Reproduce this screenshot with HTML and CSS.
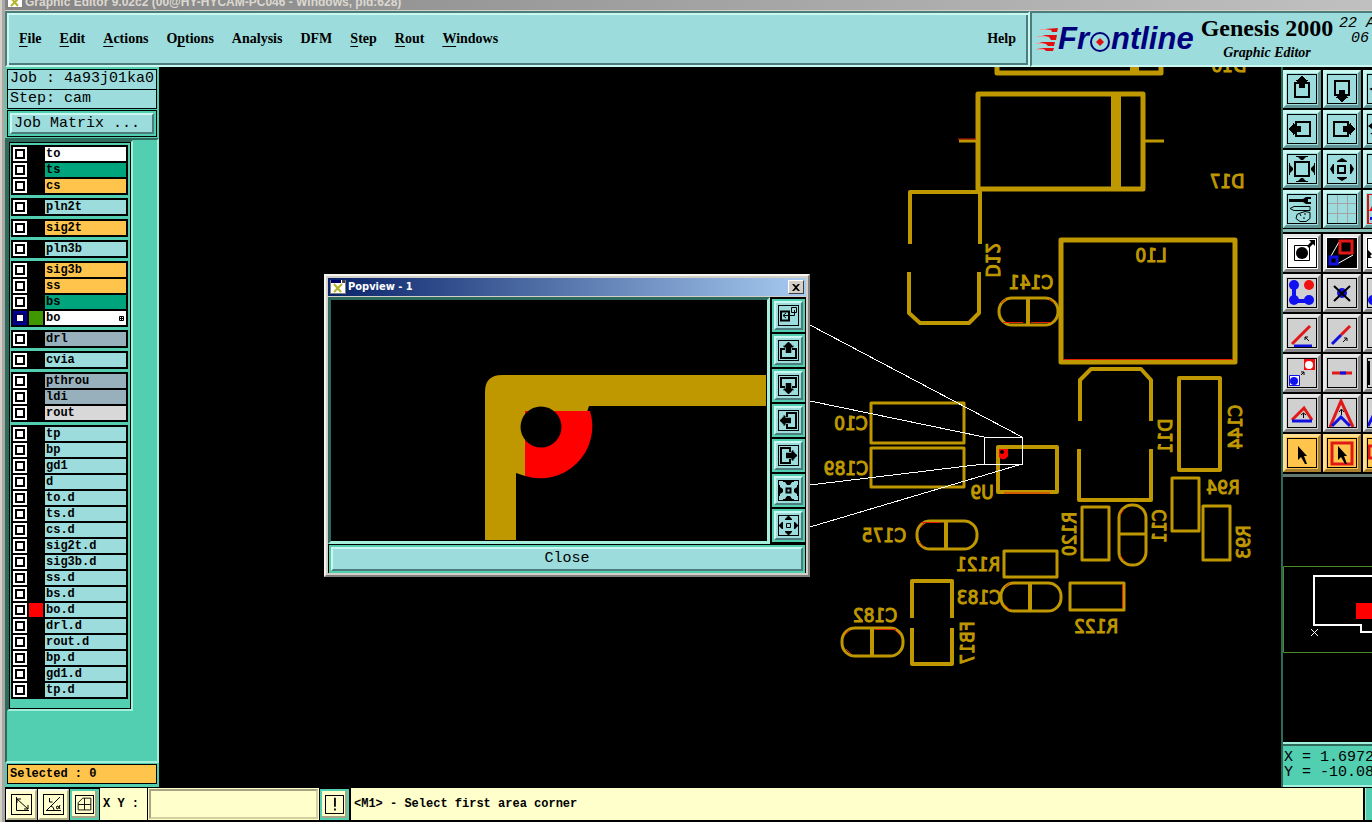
FILE: index.html
```html
<!DOCTYPE html>
<html lang="en">
<head>
<meta charset="utf-8">
<title>Graphic Editor</title>
<link rel="stylesheet" href="styles.css">
</head>
<body>
<svg class="defs" aria-hidden="true">
  <symbol id="arrow-up" viewBox="0 0 12 12"><path d="M5 0h2v1h1v1h1v1h1v1h2v1h-1v1H9v6H3V6H1V5H0V4h2V3h1V2h1V1h1z"/></symbol>
  <symbol id="xlogo" viewBox="0 0 16 14"><path fill="#fff" d="M0 0h16v14H0z"/><path fill="#00006a" d="M0 0h11v3H0z"/><path fill="#444" d="M12 0h4v3h-4z"/><path d="M4 4l7 8M12 4l-8 8" stroke="#b5b52a" stroke-width="2"/><path d="M0 13.500h16M.5 0v14M15.500 0v14" stroke="#808080"/></symbol>
</svg>
<div class="window">
  <div class="titlebar"><svg class="titleicon"><use href="#xlogo"/></svg><span>Graphic Editor 9.02c2 (00@HY-HYCAM-PC046 - Windows, pid:628)</span></div>

  <header class="header">
    <nav class="menubar">
      <button><u>F</u>ile</button><button><u>E</u>dit</button><button><u>A</u>ctions</button><button>O<u>p</u>tions</button><button>Analysis</button><button>DFM</button><button><u>S</u>tep</button><button><u>R</u>out</button><button><u>W</u>indows</button><button class="help">Help</button>
    </nav>
    <div class="brand">
      <div class="logo">
        <svg class="flames" viewBox="0 0 22 24"><path fill="#e8a0a0" d="M4 2h10v1H4zM1 9h12v1H1zM0 16h12v1H0zM0 22h10v1H0z"/><path fill="#e01010" d="M9 2l13-1-1 4h-5l-1-2zM6 8h15l-1 5h-5l-2-3zM3 15h16l-1 4h-6l-2-2zM1 21h17l-1 3h-7l-2-2z"/></svg>
        <span>Fr</span><svg class="target" viewBox="0 0 22 22"><circle cx="11" cy="11" r="9" fill="#9cdcdc" stroke="#00007c" stroke-width="2"/><path fill="#e01010" d="M11 7l4 4-4 4-4-4z"/></svg><span>ntline</span>
      </div>
      <div class="product"><strong>Genesis 2000</strong><em>Graphic Editor</em></div>
      <div class="date"><span>22 A</span><span class="time">06</span></div>
    </div>
  </header>

  <div class="main">
    <aside class="sidebar">
      <div class="info"><div>Job : 4a93j01ka0</div><div>Step: cam</div></div>
      <div class="matrix"><button>Job Matrix ...</button></div>
      <div class="well">
        <div class="layers">
          <div class="group">
            <label class="layer"><input type="checkbox"><i></i><span class="white">to</span></label>
            <label class="layer"><input type="checkbox"><i></i><span class="green">ts</span></label>
            <label class="layer"><input type="checkbox"><i></i><span class="amber">cs</span></label>
          </div>
          <div class="group"><label class="layer"><input type="checkbox"><i></i><span>pln2t</span></label></div>
          <div class="group"><label class="layer"><input type="checkbox"><i></i><span class="amber">sig2t</span></label></div>
          <div class="group"><label class="layer"><input type="checkbox"><i></i><span>pln3b</span></label></div>
          <div class="group">
            <label class="layer"><input type="checkbox"><i></i><span class="amber">sig3b</span></label>
            <label class="layer"><input type="checkbox"><i></i><span class="amber">ss</span></label>
            <label class="layer"><input type="checkbox"><i></i><span class="green">bs</span></label>
            <label class="layer"><input type="checkbox" checked><i class="lime"></i><span class="white">bo<svg class="affected" viewBox="0 0 5 5"><path d="M.5.5h4v4h-4zM2.500 0v5M0 2.500h5" fill="none" stroke="#000"/></svg></span></label>
          </div>
          <div class="group"><label class="layer"><input type="checkbox"><i></i><span class="slate">drl</span></label></div>
          <div class="group"><label class="layer"><input type="checkbox"><i></i><span>cvia</span></label></div>
          <div class="group">
            <label class="layer"><input type="checkbox"><i></i><span class="slate">pthrou</span></label>
            <label class="layer"><input type="checkbox"><i></i><span class="slate">ldi</span></label>
            <label class="layer"><input type="checkbox"><i></i><span class="plain">rout</span></label>
          </div>
          <div class="group">
            <label class="layer"><input type="checkbox"><i></i><span>tp</span></label>
            <label class="layer"><input type="checkbox"><i></i><span>bp</span></label>
            <label class="layer"><input type="checkbox"><i></i><span>gd1</span></label>
            <label class="layer"><input type="checkbox"><i></i><span>d</span></label>
            <label class="layer"><input type="checkbox"><i></i><span>to.d</span></label>
            <label class="layer"><input type="checkbox"><i></i><span>ts.d</span></label>
            <label class="layer"><input type="checkbox"><i></i><span>cs.d</span></label>
            <label class="layer"><input type="checkbox"><i></i><span>sig2t.d</span></label>
            <label class="layer"><input type="checkbox"><i></i><span>sig3b.d</span></label>
            <label class="layer"><input type="checkbox"><i></i><span>ss.d</span></label>
            <label class="layer"><input type="checkbox"><i></i><span>bs.d</span></label>
            <label class="layer"><input type="checkbox"><i class="red"></i><span>bo.d</span></label>
            <label class="layer"><input type="checkbox"><i></i><span>drl.d</span></label>
            <label class="layer"><input type="checkbox"><i></i><span>rout.d</span></label>
            <label class="layer"><input type="checkbox"><i></i><span>bp.d</span></label>
            <label class="layer"><input type="checkbox"><i></i><span>gd1.d</span></label>
            <label class="layer"><input type="checkbox"><i></i><span>tp.d</span></label>
          </div>
        </div>
      </div>
      <div class="selected">Selected : 0</div>
    </aside>

    <section class="canvas">
      <svg class="board">
        <g transform="translate(-159 -67)">
          <g class="trace">
            <path class="heavy" d="M997 66V73H1161V66"/>
            <path d="M1134.500 66v7" stroke-width="9"/>
            <path class="heavy" d="M978 94H1143V189H978z"/>
            <path class="band" d="M1116 94v95"/>
            <path class="thin" d="M959 141h18M1144 141h20"/>
            <path d="M910 244V192H980V244M909 272V313L920 323H969L979 313V272"/>
            <rect class="thin" x="999" y="298" width="59" height="27" rx="13"/><path d="M1028 298v27"/>
            <path class="heavy" d="M1061 240H1235V362H1061z"/>
            <path d="M1080 421V380L1091 369H1141L1151 380V421M1079 449V500H1151V449"/>
            <path d="M1179 378H1220V470H1179z"/>
            <path class="thin" d="M871 403H964V443H871zM871 448H964V487H871z"/>
            <path d="M998 447H1057V492H998z"/>
            <rect class="thin" x="917" y="521" width="60" height="28" rx="13"/><path d="M946 521v28"/>
            <path class="thin" d="M1082 507H1109V560H1082zM1172 478H1199V531H1172zM1203 506H1230V560H1203zM1004 551H1057V577H1004zM1070 583H1124V610H1070z"/>
            <rect class="thin" x="1119" y="505" width="27" height="60" rx="13"/><path class="thin" d="M1119 534h27"/>
            <rect class="thin" x="1001" y="583" width="60" height="28" rx="13"/><path d="M1030 583v28"/>
            <path d="M912 618V581H952V618M912 628V664H952V628"/>
            <rect class="thin" x="842" y="628" width="61" height="28" rx="13"/><path d="M872 628v28"/>
          </g>
          <path class="fringe" d="M958 139h18M1063 359.500h170M1004 493h46M1003 322.500h20M1031 322.500h20M921 522.500h20M1122.500 584v24M876 629.500h20M1001 303l5-4M1049 299l5 4M1120 515l4-6M1120 555l4 6M845 635l4-5M846 649l5 5M895 630l5 5M920 528l4-5M919 542l5 5M1005 587l5-4M1005 605l5 5"/>
          <g class="ref">
            <text transform="translate(1229 72) scale(-1 1)">D16</text>
            <text transform="translate(1227 188) scale(-1 1)">D17</text>
            <text transform="translate(1151 262) scale(-1 1)">L10</text>
            <text transform="translate(1031 289) scale(-1 1)">C141</text>
            <text transform="translate(851 430) scale(-1 1)">C10</text>
            <text transform="translate(846 475) scale(-1 1)">C189</text>
            <text transform="translate(982 499) scale(-1 1)">U9</text>
            <text transform="translate(884 542) scale(-1 1)">C175</text>
            <text transform="translate(978 571) scale(-1 1)">R121</text>
            <text transform="translate(979 604) scale(-1 1)">C183</text>
            <text transform="translate(875 622) scale(-1 1)">C182</text>
            <text transform="translate(1096 633) scale(-1 1)">R122</text>
            <text transform="translate(1223 494) scale(-1 1)">R94</text>
            <text transform="translate(986 260) rotate(-90) scale(1 -1)">D12</text>
            <text transform="translate(1172 436) rotate(90) scale(1 -1)">D11</text>
            <text transform="translate(1242 427) rotate(90) scale(1 -1)">C144</text>
            <text transform="translate(1076 534) rotate(90) scale(1 -1)">R120</text>
            <text transform="translate(1166 526) rotate(90) scale(1 -1)">C11</text>
            <text transform="translate(1250 542) rotate(90) scale(1 -1)">R93</text>
            <text transform="translate(974 643) rotate(90) scale(1 -1)">FB17</text>
          </g>
          <path d="M999 449h9v4a5 5 0 0 1-9 4z" fill="#f00"/><circle cx="1002" cy="452" r="2"/>
          <path class="lead" d="M984.500 437.500H1022.500V464.500H984.500zM810 325L1022 437M810 401L984 437M810 485L984 464M810 527L1022 464"/>
        </g>
      </svg>

      <div class="popview" role="dialog" aria-label="Popview - 1">
        <div class="poptitle"><svg class="popicon"><use href="#xlogo"/></svg><span>Popview - 1</span><button class="x" aria-label="Close window"><svg viewBox="0 0 8 7"><path d="M0 0h2l2 2 2-2h2L5 3.500 8 7H6L4 5 2 7H0l3-3.500z"/></svg></button></div>
        <div class="popbody">
          <div class="popmid">
            <svg class="detail">
              <path fill="#bf9800" d="M154 240V92q0-17 17-17H435V106H258Q238 172 185 173V240z"/>
              <path fill="#f00" d="M194 111H259A52 52 0 0 1 194 176z"/>
              <path fill="#bf9800" d="M185 106h9v70l-9-3z"/>
              <circle cx="210" cy="127" r="20.500"/>
            </svg>
            <div class="poptools">
              <button aria-label="Pick area"><svg viewBox="0 0 21 21"><path class="o2" d="M3 6.500h8v9H3z"/><path class="o1" d="M13.500 2.500h5v5h-5zM16.500 5v5.500H5M8 8l-3 2.500 3 2.500"/></svg></button>
              <button aria-label="Pan up"><svg viewBox="0 0 21 21"><path class="o2" d="M7 9H3v9h15V9h-4"/><use href="#arrow-up" x="5" y="2" width="11" height="11"/></svg></button>
              <button aria-label="Pan down"><svg viewBox="0 0 21 21"><g transform="rotate(180 10.500 10.500)"><path class="o2" d="M7 9H3v9h15V9h-4"/><use href="#arrow-up" x="5" y="2" width="11" height="11"/></g></svg></button>
              <button aria-label="Pan left"><svg viewBox="0 0 21 21"><g transform="rotate(-90 10.500 10.500)"><path class="o2" d="M7 9H3v9h15V9h-4"/><use href="#arrow-up" x="5" y="2" width="11" height="11"/></g></svg></button>
              <button aria-label="Pan right"><svg viewBox="0 0 21 21"><g transform="rotate(90 10.500 10.500)"><path class="o2" d="M7 9H3v9h15V9h-4"/><use href="#arrow-up" x="5" y="2" width="11" height="11"/></g></svg></button>
              <button aria-label="Zoom in"><svg viewBox="0 0 21 21"><path class="o2" d="M8.500 8.500h4v4h-4z"/><path d="M5 1h11v1h-2l-2 3H9L7 2H5zM5 20h11v-1h-2l-2-3H9l-2 3H5zM1 5v11h1v-2l3-2V9L2 7V5zM20 5v11h-1v-2l-3-2V9l3-2V5z"/></svg></button>
              <button aria-label="Zoom out"><svg viewBox="0 0 21 21"><path class="o1" d="M8.500 8.500h4v4h-4z"/><path d="M10 1h1l3 3v1H7V4zM10 20h1l3-3v-1H7v1zM1 10v1l3 3h1V7H4zM20 10v1l-3 3h-1V7h1z"/></svg></button>
            </div>
          </div>
          <div class="popclose"><button>Close</button></div>
        </div>
      </div>
    </section>

    <aside class="tools">
      <div class="toolgrid cyan">
        <button aria-label="Pan up"><svg viewBox="0 0 30 30"><path class="o2" d="M8 9h14v14H8z"/><use href="#arrow-up" x="9" y="2" width="12" height="12"/></svg></button>
        <button aria-label="Pan down"><svg viewBox="0 0 30 30"><path class="o2" d="M8 7h14v14H8z"/><use href="#arrow-up" x="9" y="2" width="12" height="12" transform="rotate(180 15 15)"/></svg></button>
        <button aria-label="Previous view"><svg viewBox="0 0 30 30"><path d="M2 15l5-2v4z"/></svg></button>
        <button aria-label="Pan left"><svg viewBox="0 0 30 30"><path class="o2" d="M9 8h14v14H9z"/><use href="#arrow-up" x="9" y="2" width="12" height="12" transform="rotate(-90 15 15)"/></svg></button>
        <button aria-label="Pan right"><svg viewBox="0 0 30 30"><path class="o2" d="M7 8h14v14H7z"/><use href="#arrow-up" x="9" y="2" width="12" height="12" transform="rotate(90 15 15)"/></svg></button>
        <button aria-label="Home view"><svg viewBox="0 0 30 30"><path d="M1 12l4-3v6zM3 19h4v3z"/></svg></button>
        <button aria-label="Zoom in"><svg viewBox="0 0 30 30"><path class="o2" d="M8 8h14v14H8z"/><path d="M9 2h12v1h-2l-3 3h-2l-3-3H9zM9 28h12v-1h-2l-3-3h-2l-3 3H9zM2 9v12h1v-2l3-3v-2l-3-3V9zM28 9v12h-1v-2l-3-3v-2l3-3V9z"/></svg></button>
        <button aria-label="Zoom out"><svg viewBox="0 0 30 30"><path class="o2" d="M11 12h7v7h-7z"/><path d="M15 4l5 3v1H10V7zM15 27l5-3v-1H10v1zM3 15l3-5h1v10H6zM27 15l-3-5h-1v10h1z"/></svg></button>
        <button aria-label="Fit"><svg viewBox="0 0 30 30"></svg></button>
        <button aria-label="Setup"><svg viewBox="0 0 30 30"><path d="M2 5h14l3-2h5v2h-3v3h3v2h-5l-3-2H2z"/><path class="o1" d="M3 14.500l4-2h16v4H7zM12 19.500l6-2 5 1v6l-4 3h-6l-4-3 1-4zM13 20l1 2M18 19v2M16 24h2"/></svg></button>
        <button aria-label="Grid"><svg viewBox="0 0 30 30"><path d="M10.500 0v30M20.500 0v30M0 9.500h30M0 19.500h30" stroke="#a0a4a4"/></svg></button>
        <button aria-label="Snap" class="hot"><svg viewBox="0 0 30 30"><path fill="#e01010" d="M0 0h2v30H0zM2 17l3-5v5z"/><path fill="#1010e0" d="M3 23h2v3H3z"/></svg></button>
      </div>
      <div class="toolgrid grey">
        <button class="white" aria-label="Select"><svg viewBox="0 0 30 30"><path class="o1" d="M7.500 7.500h15v15h-15z"/><circle cx="15" cy="15" r="6"/><path d="M20 8l4-4-2-2h6v6l-2-2-4 4z"/></svg></button>
        <button class="white" aria-label="Popview"><svg class="dark" viewBox="0 0 30 30"><path d="M4 18L12 4M10 26l16-9" stroke="#fff"/><path class="r" d="M13 3h12v12H13z"/><path class="b" d="M3 19h7v7H3z"/></svg></button>
        <button class="white" aria-label="Window"><svg viewBox="0 0 30 30"><path d="M1 12v8h4l-2-2 2-2z"/></svg></button>
        <button aria-label="Chain"><svg viewBox="0 0 30 30"><path d="M7 7v16h16" stroke="#1010f0" stroke-width="4" fill="none"/><g fill="#1010f0"><circle cx="7" cy="7" r="5"/><circle cx="7" cy="22" r="5"/><circle cx="22" cy="22" r="5"/></g><circle cx="22" cy="7" r="5" fill="#f01010"/></svg></button>
        <button aria-label="Delete"><svg viewBox="0 0 30 30"><circle cx="15" cy="15" r="5" fill="#1010e0"/><path class="o2" d="M7 8l16 15M23 8L7 23"/></svg></button>
        <button aria-label="Copy"><svg viewBox="0 0 30 30"><circle cx="6" cy="22" r="5" fill="#1010f0"/></svg></button>
        <button aria-label="Rotate line"><svg viewBox="0 0 30 30"><path class="r" d="M5 26L23 8"/><path class="b" d="M7 28h18"/><path class="o1" d="M22 23l-4-4M18 22v-3h3"/></svg></button>
        <button aria-label="Extend line"><svg viewBox="0 0 30 30"><path class="r" d="M14 17l9-9"/><path class="b" d="M5 26l9-9"/><path class="o1" d="M16 24l4-4M17 20h3v3"/></svg></button>
        <button aria-label="Trim line"><svg viewBox="0 0 30 30"></svg></button>
        <button aria-label="Move"><svg viewBox="0 0 30 30"><path fill="#f01010" d="M17 1h11v11H17z"/><circle cx="22" cy="7" r="4" fill="#fff"/><path d="M2.500 17.500h10v10h-10z" fill="#fff" stroke="#1010f0"/><circle cx="7" cy="23" r="4" fill="#1010f0"/><path class="o1" d="M14 17l3-3M14 14h3v3"/></svg></button>
        <button aria-label="Break"><svg viewBox="0 0 30 30"><path class="r" d="M5 15h20"/><path class="b" d="M13 15h6"/></svg></button>
        <button aria-label="Resize"><svg viewBox="0 0 30 30"><path class="o2" d="M2 3v24"/></svg></button>
        <button aria-label="Stretch"><svg viewBox="0 0 30 30"><path class="r" d="M5 22L17 10l8 12"/><path class="b" d="M5 23h20"/><path class="o1" d="M16.500 20v-5M14 17l2.500-2 2.500 2"/></svg></button>
        <button aria-label="Taper"><svg viewBox="0 0 30 30"><path class="r" d="M3 29L14 3l12 26"/><path class="b" d="M5 28l9-9 9 9"/><path class="o1" d="M14.500 17v-5M12 14l2.500-3 2.500 3"/></svg></button>
        <button aria-label="Bend"><svg viewBox="0 0 30 30"><path class="b" d="M1 28L8 14"/></svg></button>
        <button class="amber" aria-label="Pointer"><svg viewBox="0 0 30 30"><path d="M11 8v14l3-3 4 7h2l-3-8h3z"/></svg></button>
        <button class="amber" aria-label="Area select"><svg viewBox="0 0 30 30"><path class="r" d="M5 5h20v21H5z"/><path d="M11 8v14l3-3 4 7h2l-3-8h3z"/></svg></button>
        <button class="amber" aria-label="Polygon select"><svg viewBox="0 0 30 30"><path class="r" d="M20 8H2v12h18"/></svg></button>
      </div>
      <svg class="map">
        <g transform="translate(-1283 -477)">
          <path fill="none" stroke="#4c8c24" d="M1390 566.500H1283.500V652.500H1390"/>
          <path fill="none" stroke="#fff" stroke-width="2" d="M1390 576H1314V625H1361V632H1390"/>
          <path fill="#f00" d="M1356 603h34v16h-34z"/>
          <path stroke="#fff" d="M1311 629l7 7M1318 629l-7 7"/>
        </g>
      </svg>
      <div class="coords">X = 1.6972<br>Y = -10.08</div>
    </aside>
  </div>

  <footer class="status">
    <button aria-label="Absolute"><svg viewBox="0 0 21 21"><path class="o1" d="M5.500 3v13.500H18M6 5l11 10M6 9V5h4M17 11v4h-4"/></svg></button>
    <button aria-label="Angle"><svg viewBox="0 0 21 21"><path class="o1" d="M3 16.500h15M4 16L17 3M6.500 4v4h3M8 12q3 1 3 4M17 11q-1 4-3 4-1-2 0-3 2 0 3 3"/></svg></button>
    <button class="on" aria-label="Grid snap"><svg viewBox="0 0 21 21"><path class="o1" d="M3.500 16.500V8.500L8.500 3.500H17.500V16.500zM3.500 10.500h14M10.500 3.500v13"/></svg></button>
    <label for="xy">X Y :</label>
    <input id="xy" type="text">
    <button class="on" aria-label="Alert"><svg viewBox="0 0 21 21"><path d="M10 3h2v10h-2zM10 15h2v2h-2z"/></svg></button>
    <output>&lt;M1&gt; - Select first area corner</output>
    <div class="end"></div>
  </footer>
</div>
</body>
</html>
```
FILE: styles.css
```css
:root {
  --cyan: #9cdcdc;
  --light: #c8f8f0;
  --dark: #4c7c7c;
  --teal: #52ceb0;
  --teal-dark: #2e6a5c;
  --teal-light: #a4f0dc;
  --cream: #ffffcc;
  --amber: #ffc44c;
  --gold: #bf9800;
  --mono: "Liberation Mono", "DejaVu Sans Mono", monospace;
  --serif: "Liberation Serif", serif;
  --sans: "Liberation Sans", sans-serif;
}
* { box-sizing: border-box; }
body { margin: 0; background: #d4d0c8; overflow: hidden; }
button { margin: 0; padding: 0; border-radius: 0; color: #000; font: inherit; }
svg { display: block; }
.defs { display: none; }
.o1 { fill: none; stroke: #000; stroke-width: 1; }
.o2 { fill: none; stroke: #000; stroke-width: 2; }
.r { fill: none; stroke: #e01818; stroke-width: 2; }
.b { fill: none; stroke: #1010e0; stroke-width: 2; }

.window {
  display: grid;
  grid-template-rows: 11px 56px 1fr 35px;
  min-height: 100vh;
  margin-left: 2px;
  border-left: 3px solid #a8a8a4;
  background: #000;
}

.titlebar {
  display: flex;
  align-items: flex-end;
  gap: 2px;
  overflow: hidden;
  padding-left: 2px;
  background: linear-gradient(90deg, #848484, #c0c0c0);
  border-bottom: 1px solid #d4d0c8;
  color: #dcd8d0;
  font: bold 12px/16px var(--sans);
  white-space: nowrap;
}
.titleicon { width: 16px; height: 14px; flex: none; margin-bottom: 2px; }

.header { display: grid; grid-template-columns: 1fr 342px; min-width: 0; }
.menubar {
  display: flex;
  align-items: center;
  gap: 18px;
  padding: 0 12px;
  background: var(--cyan);
  border: 2px solid;
  border-color: var(--dark) var(--light) var(--light) var(--dark);
  box-shadow: inset 2px 2px 0 var(--light), inset -2px -2px 0 var(--dark);
}
.menubar button { border: 0; background: none; font: bold 14px/20px var(--serif); }
.menubar u { text-underline-offset: 3px; }
.menubar .help { margin-left: auto; }
.brand {
  display: flex;
  overflow: hidden;
  background: var(--cyan);
  border: 2px solid;
  border-color: var(--dark) transparent var(--light) var(--dark);
  border-right: 0;
  padding-left: 4px;
  white-space: nowrap;
}
.logo { display: flex; align-items: center; color: #00007c; font: italic bold 31px/46px var(--sans); flex: none; width: 162px; }
.flames { width: 22px; height: 24px; flex: none; }
.target { width: 22px; height: 22px; flex: none; margin-top: 6px; }
.product { display: flex; flex-direction: column; align-items: center; flex: none; width: 138px; }
.product strong { font: bold 24px/30px var(--serif); }
.product em { font: italic bold 14px/20px var(--serif); }
.date { display: flex; flex-direction: column; flex: none; margin-left: 3px; padding-top: 3px; font: italic 15px/15px var(--mono); }
.time { padding-left: 12px; }

.main { display: grid; grid-template-columns: 154px 1fr 91px; min-height: 0; }

.sidebar { display: flex; flex-direction: column; background: var(--teal); padding-top: 2px; font: 15px/18px var(--mono); }
.info { margin: 0 2px; border: 1px solid #000; background: var(--cyan); white-space: nowrap; }
.info div { padding-left: 2px; height: 19px; }
.info div + div { border-top: 1px solid #000; }
.matrix { margin: 1px 2px; border: 1px solid #000; padding: 2px; }
.matrix button {
  width: 100%;
  height: 21px;
  padding-left: 2px;
  text-align: left;
  font: 15px/17px var(--mono);
  background: var(--cyan);
  border: 2px solid;
  border-color: var(--light) var(--dark) var(--dark) var(--light);
}
.well {
  flex: 1;
  border: 2px solid;
  border-color: var(--teal-dark) var(--teal-light) var(--teal-light) var(--teal-dark);
}
.layers {
  display: grid;
  gap: 3px;
  width: 126px;
  padding: 3px 3px 10px 2px;
  border: 2px solid;
  border-color: var(--teal-dark) var(--teal-light) var(--teal-light) var(--teal-dark);
  box-shadow: inset 0 0 0 1px #000;
}
.group { display: grid; gap: 2px; padding: 2px; background: #000; }
.layer { display: grid; grid-template-columns: 14px 14px 1fr; gap: 2px; height: 14px; font: bold 12px/14px var(--mono); }
.layer input {
  appearance: none;
  width: 14px;
  height: 14px;
  margin: 0;
  background: #fff;
  border: 2px solid #fff;
  box-shadow: inset 0 0 0 2px #000;
}
.layer input:checked { border-color: #0000a0; box-shadow: inset 0 0 0 2px #000060; }
.layer span { display: flex; align-items: center; justify-content: space-between; padding: 0 2px 0 1px; background: var(--cyan); }
.layer .white { background: #fff; }
.layer .green { background: #00a47c; }
.layer .amber { background: var(--amber); }
.layer .slate { background: #98b0bc; }
.layer .plain { background: #d8d8d8; }
.lime { background: #409800; }
.red { background: #f00; }
.affected { width: 5px; height: 5px; }
.selected { margin: 1px 2px 3px; padding: 0 2px; border: 1px solid #000; background: var(--amber); font: bold 12px/18px var(--mono); }

.canvas { position: relative; overflow: hidden; background: #000; min-width: 0; }
.board { width: 100%; height: 100%; position: absolute; }
.trace { fill: none; stroke: var(--gold); stroke-width: 4; stroke-linejoin: round; }
.trace .thin { stroke-width: 3; }
.trace .heavy { stroke-width: 5; }
.trace .band { stroke-width: 10; }
.fringe { fill: none; stroke: #e02000; stroke-width: 1; }
.ref { fill: var(--gold); stroke: var(--gold); stroke-width: 1; font: 19px "DejaVu Sans Condensed", sans-serif; text-anchor: middle; }
.lead { fill: none; stroke: #fff; stroke-width: 1; shape-rendering: crispEdges; }

.popview {
  position: absolute;
  left: 165px;
  top: 207px;
  width: 486px;
  padding: 2px;
  background: #d4d0c8;
  border: 2px solid;
  border-color: #f4f4f0 #808080 #808080 #f4f4f0;
}
.poptitle { display: flex; align-items: center; gap: 2px; height: 18px; padding: 0 2px; margin-bottom: 1px; background: linear-gradient(90deg, #0a246a, #a6caf0); color: #fff; font: bold 11px/18px "DejaVu Sans Condensed", var(--sans); }
.popicon { width: 16px; height: 14px; }
.x { display: grid; place-items: center; margin-left: auto; width: 16px; height: 14px; background: #d4d0c8; border: 1px solid; border-color: #fff #404040 #404040 #fff; }
.x svg { width: 8px; height: 7px; }
.popbody { background: #000; }
.popmid { display: grid; grid-template-columns: 1fr 36px; }
.detail { width: 100%; height: 247px; border: 3px solid; border-color: var(--teal-dark) var(--teal-light) var(--teal-light) var(--teal-dark); }
.poptools { display: grid; grid-auto-rows: 29px; gap: 6px; padding: 4px 0 0 4px; }
.poptools button { width: 29px; padding: 2px; background: var(--cyan); border: 2px solid; border-color: var(--light) var(--dark) var(--dark) var(--light); box-shadow: 0 0 0 2px var(--teal); }
.poptools svg { width: 21px; height: 21px; outline: 1px solid #000; outline-offset: -1px; }
.popclose { padding: 2px; margin: 1px 1px 0; background: var(--teal); }
.popclose button { display: block; width: 100%; height: 24px; background: var(--cyan); border: 2px solid; border-color: var(--light) var(--dark) var(--dark) var(--light); font: 15px/20px var(--mono); }

.tools { display: flex; flex-direction: column; overflow: hidden; border-left: 2px solid var(--teal-dark); background: #000; }
.toolgrid { display: grid; grid-template-columns: repeat(3, 38px); grid-auto-rows: 38px; gap: 2px; padding-top: 3px; flex: none; }
.toolgrid button { padding: 1px; background: var(--cyan); border: 3px solid; border-color: var(--light) #609494 #609494 var(--light); }
.toolgrid svg { width: 30px; height: 30px; outline: 1px solid #000; outline-offset: -1px; }
.toolgrid .hot svg { outline-color: #e01010; }
.toolgrid .r, .toolgrid .b { stroke-width: 3; }
.cyan { padding-bottom: 1px; border-bottom: 3px solid #88bcb4; }
.grey { padding-top: 2px; padding-bottom: 2px; border-bottom: 3px solid #607870; }
.grey button { background: #d0d0d0; border-color: #e8e8e8 #888 #888 #e8e8e8; }
.grey .white { background: #fff; }
.grey .amber { background: var(--amber); border-color: #ffe090 #a88030 #a88030 #ffe090; }
.dark { background: #000; }
.map { width: 100%; flex: 1; min-height: 0; }
.coords { height: 45px; padding: 6px 0 0 1px; background: var(--teal); border: solid; border-width: 2px 0; border-color: var(--teal-light); font: 15px/15px var(--mono); white-space: nowrap; box-shadow: inset 0 2px 0 var(--teal-dark); flex: none; }

.status { display: flex; align-items: center; gap: 1px; padding: 1px 0 2px 1px; font: bold 12px/16px var(--mono); }
.status button { width: 31px; height: 31px; background: var(--cream); border: 2px solid; border-color: #fffff0 #b0b08c #b0b08c #fffff0; display: grid; place-items: center; flex: none; }
.status button.on { width: 29px; border: 2px solid var(--teal); box-shadow: inset -2px -2px 0 #a8a484; }
.status svg { width: 21px; height: 21px; outline: 1px solid #000; outline-offset: -1px; }
.status .on svg { width: 19px; height: 19px; }
.status label { align-self: stretch; width: 47px; padding-left: 3px; line-height: 32px; background: var(--cream); white-space: nowrap; flex: none; }
.status input { width: 171px; height: 32px; border: 3px solid; border-color: #a8a484 #d4d0a0 #d4d0a0 #a8a484; outline: 1px solid var(--cream); outline-offset: -1px; background: var(--cream); font: inherit; flex: none; }
.status output { flex: 1; align-self: stretch; margin-left: 1px; padding-left: 3px; line-height: 32px; background: var(--cream); white-space: nowrap; }
.end { width: 7px; margin-left: 1px; align-self: stretch; background: var(--teal); border-left: 1px solid var(--teal-light); }
```
